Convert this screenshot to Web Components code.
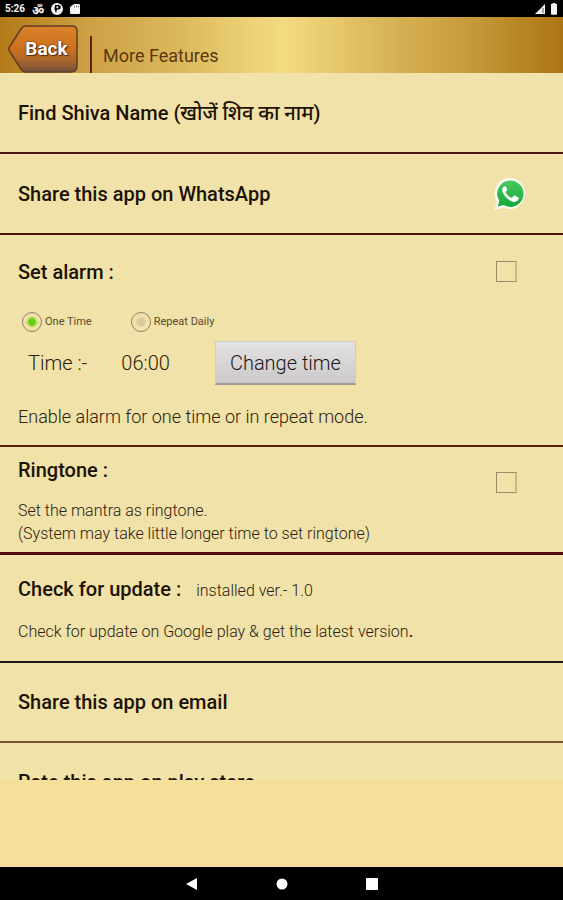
<!DOCTYPE html>
<html lang="en">
<head>
<meta charset="utf-8">
<meta name="viewport" content="width=device-width, initial-scale=1">
<title>More Features</title>
<style>
    html, body { height: 100%; margin: 0; }
    body { font-family: Roboto, "Noto Sans", "Noto Sans Devanagari", sans-serif; color: #241708; background: #f4e09b; }
</style>
</head>
<body>
<features-screen></features-screen>

<script>
/**
 * Black system bar on top: clock, notification icons, signal and battery.
 */
class StatusBar extends HTMLElement {
    constructor() {
        super();
        this.attachShadow({ mode: 'open' });
    }

    connectedCallback() {
        this.shadowRoot.innerHTML = `
        <style>
            :host { display: flex; align-items: center; gap: 7px; height: 17px; padding: 1px 3px 0 5px; box-sizing: border-box; background: #000; color: #f4f4f4; font-size: 10px; font-weight: 700; line-height: 16px; }
            svg { display: block; width: 12px; height: 12px; fill: #f4f4f4; }
            .om { padding-top: 3px; font-size: 12px; }
            .right { display: flex; gap: 2px; margin-left: auto; }
        </style>
        <span>5:26</span>
        <span class="om">ॐ</span>
        <svg viewBox="0 0 12 12"><circle cx="6" cy="6" r="6"/><path d="M4 2h3.500a2.200 2.200 0 0 1 0 4.500H6l-1 3.500L3.500 6z" fill="#000"/><path d="M5.500 3.200h1.700v2H5.500z"/></svg>
        <svg viewBox="0 0 12 12"><path d="M4 1h5a1 1 0 0 1 1 1v8a1 1 0 0 1-1 1H1a1 1 0 0 1-1-1V4z"/><path d="M4 2.500h1v2H4zM6 2.500h1v2H6zM8 2.500h1v2H8z" fill="#888"/></svg>
        <div class="right">
            <svg viewBox="0 0 12 12"><path d="M11 1v10H1z"/><path d="M8.500 5h1v5h-1z" fill="#555"/></svg>
            <svg viewBox="0 0 12 12"><path d="M4.500 0h3v1H9v10a.7.7 0 0 1-.7.700H3.700A.7.7 0 0 1 3 11V1h1.500z"/></svg>
        </div>`;
    }
}

/**
 * Golden title bar with the arrow shaped back button.
 */
class TitleBar extends HTMLElement {
    constructor() {
        super();
        this.attachShadow({ mode: 'open' });
    }

    connectedCallback() {
        this.shadowRoot.innerHTML = `
        <style>
            :host { display: flex; align-items: stretch; height: 56px; padding-left: 8px; background: linear-gradient(90deg, #b27a19 0%, #cda146 16%, #dbb85c 32%, #f4db80 50%, #dbb85c 67%, #c69b3c 83%, #ad7414 100%); }
            button { display: grid; align-self: flex-end; width: 70px; height: 48px; margin: 0; padding: 0; border: 0; background: none; font: 700 19px/24px Roboto, sans-serif; color: #fff; text-shadow: 0 0 2px #5a2208, 1px 1px 1px #5a2208; cursor: pointer; }
            button svg { grid-area: 1 / 1; width: 70px; height: 48px; }
            button span { grid-area: 1 / 1; z-index: 1; align-self: center; padding-left: 7px; }
            .rule { align-self: flex-end; width: 2px; height: 37px; margin-left: 12px; background: #651c08; }
            h1 { margin: 0; padding: 27px 0 0 11px; font-size: 18px; font-weight: 400; line-height: 24px; color: #5c380e; }
        </style>
        <button type="button">
            <svg viewBox="0 0 70 48">
                <defs><linearGradient id="g" x1="0" y1="0" x2="0" y2="1">
                    <stop offset="0" stop-color="#d9822c"/><stop offset=".5" stop-color="#cd701c"/><stop offset=".72" stop-color="#b0682c"/><stop offset="1" stop-color="#73503c"/>
                </linearGradient></defs>
                <path d="M17 1H64Q69 1 69 6V41Q69 47 63 47H18Q15 47 13 44L2 27Q0 24 2 21L13 4Q15 1 17 1z" fill="url(#g)" stroke="#5f3e20" stroke-width="1.500"/>
            </svg>
            <span>Back</span>
        </button>
        <div class="rule"></div>
        <h1><slot></slot></h1>`;
    }
}

/**
 * Plain tappable row, with an optional icon at its right side.
 */
class FeatureLink extends HTMLElement {
    constructor() {
        super();
        this.attachShadow({ mode: 'open' });
    }

    connectedCallback() {
        this.shadowRoot.innerHTML = `
        <style>
            :host { display: block; flex: none; border-bottom: 2px solid var(--line, #4c1410); }
            button { display: flex; align-items: center; justify-content: space-between; box-sizing: border-box; width: 100%; height: var(--row-height, 79px); margin: 0; padding: 0 36px 0 18px; border: 0; background: none; color: #1c1206; font: inherit; font-size: 20px; font-weight: 500; line-height: 24px; text-align: left; cursor: pointer; }
        </style>
        <button type="button"><span><slot></slot></span><slot name="icon"></slot></button>`;
    }
}

/**
 * Row with a bold title, a body below it and, with the "switch" attribute,
 * a tick box at the right that the title labels.
 */
class FeaturePanel extends HTMLElement {
    constructor() {
        super();
        this.attachShadow({ mode: 'open' });
    }

    connectedCallback() {
        const hasSwitch = this.hasAttribute('switch');
        const title = this.getAttribute('heading');
        this.shadowRoot.innerHTML = `
        <style>
            :host { display: flex; flex: none; justify-content: space-between; align-items: flex-start; padding: 25px 46px 16px 18px; border-bottom: 2px solid var(--line, #5a1c0c); }
            .main { flex: 1; }
            .head { display: flex; align-items: baseline; gap: 15px; line-height: 24px; }
            .title { font-size: 20px; font-weight: 500; color: #1c1206; }
            input { appearance: none; flex: none; width: 21px; height: 21px; margin: var(--switch-top, 1px) 0 0; border: 1px solid #9c8a66; border-right: 2px solid #c9b98b; background: transparent; cursor: pointer; }
            input:checked { background: #7cc820; }
        </style>
        <div class="main">
            <div class="head">
                ${hasSwitch ? `<label class="title" for="toggle">${title}</label>` : `<span class="title">${title}</span>`}
                <slot name="note"></slot>
            </div>
            <slot></slot>
        </div>
        ${hasSwitch ? '<input type="checkbox" id="toggle">' : ''}`;
    }
}

/**
 * Alarm mode radios and the time line with its button.
 */
class AlarmSettings extends HTMLElement {
    constructor() {
        super();
        this.attachShadow({ mode: 'open' });
    }

    connectedCallback() {
        this.shadowRoot.innerHTML = `
        <style>
            :host { display: block; }
            .modes { display: flex; gap: 39px; margin: 28px 0 9px 4px; }
            label { display: flex; align-items: center; gap: 3px; font-size: 11px; line-height: 20px; color: #5c4c2c; cursor: pointer; }
            input { appearance: none; width: 20px; height: 20px; margin: 0; border: 1px solid #8e806a; border-radius: 50%; background: radial-gradient(circle, #d8cca0 0 4px, transparent 5px); }
            input:checked { background: radial-gradient(circle, #62d010 0 3px, #a4d850 4px, transparent 6px); }
            .time { display: flex; align-items: center; padding-left: 10px; font-size: 20px; font-weight: 300; line-height: 24px; color: #2c1e0c; }
            time { margin: 0 45px 0 34px; }
            button { height: 44px; padding: 0 14px; border: 1px solid #d0ccc4; border-bottom: 2px solid #a09b94; background: linear-gradient(#e3e1e2, #cbc9ca); color: #1c1816; font: inherit; cursor: pointer; }
        </style>
        <div class="modes">
            <label><input type="radio" name="mode" checked>One Time</label>
            <label><input type="radio" name="mode">Repeat Daily</label>
        </div>
        <div class="time">
            <span>Time :-</span>
            <time>06:00</time>
            <button type="button">Change time</button>
        </div>`;
    }
}

/**
 * System navigation: back, home, recent apps.
 */
class NavBar extends HTMLElement {
    constructor() {
        super();
        this.attachShadow({ mode: 'open' });
    }

    connectedCallback() {
        this.shadowRoot.innerHTML = `
        <style>
            :host { display: flex; flex: none; justify-content: center; align-items: center; gap: 66px; height: 33px; background: #000; }
            button { width: 24px; height: 24px; padding: 6px; border: 0; background: none; cursor: pointer; }
            svg { display: block; width: 12px; height: 12px; fill: #fff; }
        </style>
        <button type="button" aria-label="Back"><svg viewBox="0 0 12 12"><path d="M11 0v12L0 6z"/></svg></button>
        <button type="button" aria-label="Home"><svg viewBox="0 0 12 12"><circle cx="6" cy="6" r="5.500"/></svg></button>
        <button type="button" aria-label="Recent apps"><svg viewBox="0 0 12 12"><rect width="12" height="12" rx="1"/></svg></button>`;
    }
}

class FeaturesScreen extends HTMLElement {
    constructor() {
        super();
        this.attachShadow({ mode: 'open' });
    }

    connectedCallback() {
        this.shadowRoot.innerHTML = `
        <style>
            :host { display: flex; flex-direction: column; height: 100vh; }
            status-bar, title-bar { flex: none; }
            main { display: flex; flex: 1; flex-direction: column; min-height: 0; overflow: hidden; background: #f0e2a8; }
            .banner { flex: none; height: 87px; background: #f4e09b; }
            p { margin: 0; color: #2e200c; font-size: 16px; font-weight: 300; line-height: 23px; }
            .alarm p { margin-top: 20px; font-size: 18px; line-height: 24px; }
            .ringtone { --switch-top: 14px; --line: #560c0c; padding-top: 11px; padding-bottom: 7px; border-bottom-width: 3px; }
            .ringtone p { margin-top: 17px; }
            .update { --line: #201818; padding-top: 22px; padding-bottom: 18px; }
            .update p { margin-top: 17px; }
            .update b { font-weight: 500; }
            .update [slot] { font-size: 16px; font-weight: 300; color: #2e200c; }
            .email { --line: #76523a; }
            .email, .rate { --row-height: 78px; }
            .whatsapp svg { display: block; width: 34px; height: 34px; }
        </style>
        <status-bar></status-bar>
        <title-bar>More Features</title-bar>
        <main>
            <feature-link>Find Shiva Name (खोजें शिव का नाम)</feature-link>
            <feature-link class="whatsapp">Share this app on WhatsApp
                <svg slot="icon" viewBox="0 0 34 34">
                    <defs><linearGradient id="w" x1="0" y1="0" x2="0" y2="1"><stop offset="0" stop-color="#48c85c"/><stop offset="1" stop-color="#16a83c"/></linearGradient></defs>
                    <path d="M17.500 1A15.500 15.500 0 0 0 4 24.500L1.500 33l8.700-2.400A15.500 15.500 0 1 0 17.500 1z" fill="#fdfdf8"/>
                    <path d="M17.500 3.500a13.200 13.200 0 0 0-11.200 20.300l-1.500 5.800 5.900-1.500A13.200 13.200 0 1 0 17.500 3.500z" fill="url(#w)"/>
                    <path d="M12.200 9.200c-.6-.1-1.400.2-2 .9-1 1.200-1.300 3-.6 5 1.500 4.300 5.800 8.300 10.400 9.600 2.600.7 5-.7 5.600-2.600.2-.8.2-1.400-.2-1.700l-3.600-1.800c-.5-.2-.9-.1-1.300.4l-1.200 1.500c-.3.3-.7.4-1.200.1-2.300-1.100-4-2.700-5.200-4.900-.2-.4-.2-.7.1-1.100l1-1.300c.2-.4.300-.7.1-1.200l-1.100-2.400c-.2-.3-.4-.5-.8-.5z" fill="#fff"/>
                </svg>
            </feature-link>
            <feature-panel class="alarm" heading="Set alarm :" switch>
                <alarm-settings></alarm-settings>
                <p>Enable alarm for one time or in repeat mode.</p>
            </feature-panel>
            <feature-panel class="ringtone" heading="Ringtone :" switch>
                <p>Set the mantra as ringtone.<br>(System may take little longer time to set ringtone)</p>
            </feature-panel>
            <feature-panel class="update" heading="Check for update :">
                <span slot="note">installed ver.- 1.0</span>
                <p>Check for update on Google play &amp; get the latest version<b>.</b></p>
            </feature-panel>
            <feature-link class="email">Share this app on email</feature-link>
            <feature-link class="rate">Rate this app on play store</feature-link>
        </main>
        <div class="banner"></div>
        <nav-bar></nav-bar>`;
    }
}

customElements.define('status-bar', StatusBar);
customElements.define('title-bar', TitleBar);
customElements.define('feature-link', FeatureLink);
customElements.define('feature-panel', FeaturePanel);
customElements.define('alarm-settings', AlarmSettings);
customElements.define('nav-bar', NavBar);
customElements.define('features-screen', FeaturesScreen);
</script>
</body>
</html>
